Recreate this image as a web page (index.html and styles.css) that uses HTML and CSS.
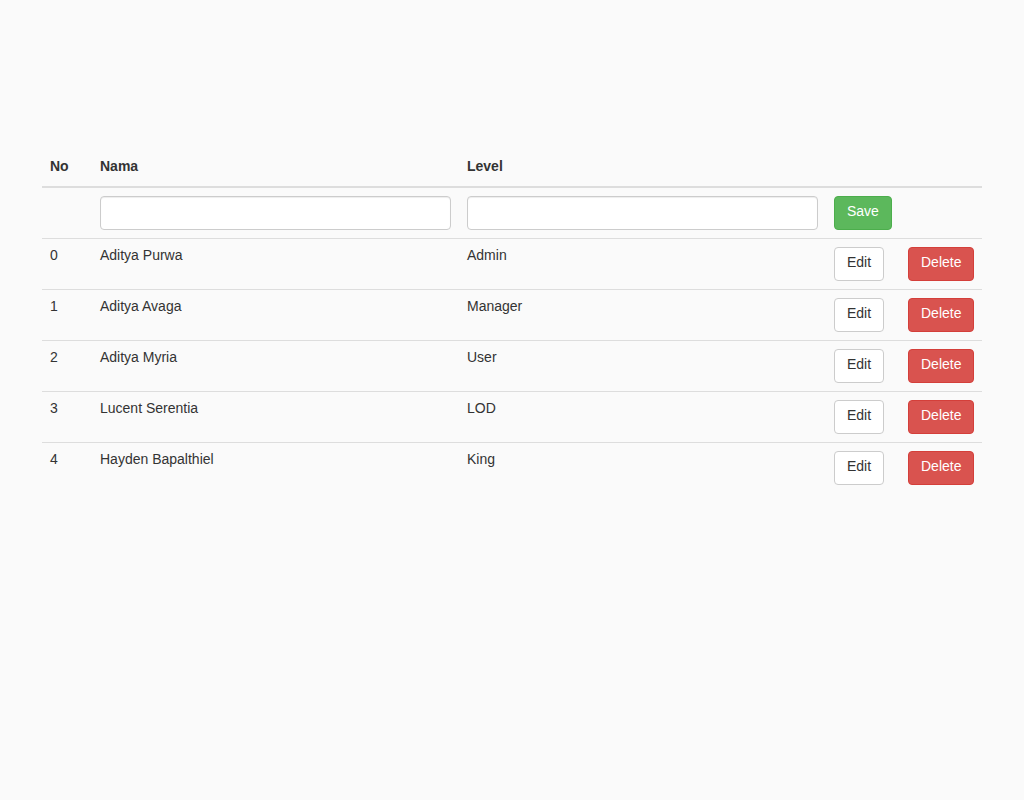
FILE: index.html
```html
<!DOCTYPE html>
<html>
<head>
<meta charset="utf-8">
<link rel="stylesheet" href="styles.css">
</head>
<body>
<div class="container">
  <table class="table">
    <colgroup>
      <col class="c-no"><col class="c-name"><col class="c-level"><col class="c-act1"><col class="c-act2">
    </colgroup>
    <thead>
      <tr><th>No</th><th>Nama</th><th>Level</th><th></th><th></th></tr>
    </thead>
    <tbody>
      <tr>
        <td></td>
        <td class="ctl"><input class="form-control" type="text"></td>
        <td class="ctl"><input class="form-control" type="text"></td>
        <td class="ctl"><button class="btn btn-success">Save</button></td>
        <td></td>
      </tr>
      <tr><td>0</td><td>Aditya Purwa</td><td>Admin</td><td class="ctl"><button class="btn btn-default">Edit</button></td><td class="ctl"><button class="btn btn-danger">Delete</button></td></tr>
      <tr><td>1</td><td>Aditya Avaga</td><td>Manager</td><td class="ctl"><button class="btn btn-default">Edit</button></td><td class="ctl"><button class="btn btn-danger">Delete</button></td></tr>
      <tr><td>2</td><td>Aditya Myria</td><td>User</td><td class="ctl"><button class="btn btn-default">Edit</button></td><td class="ctl"><button class="btn btn-danger">Delete</button></td></tr>
      <tr><td>3</td><td>Lucent Serentia</td><td>LOD</td><td class="ctl"><button class="btn btn-default">Edit</button></td><td class="ctl"><button class="btn btn-danger">Delete</button></td></tr>
      <tr><td>4</td><td>Hayden Bapalthiel</td><td>King</td><td class="ctl"><button class="btn btn-default">Edit</button></td><td class="ctl"><button class="btn btn-danger">Delete</button></td></tr>
    </tbody>
  </table>
</div>
</body>
</html>
```

FILE: styles.css
```css
* { box-sizing: border-box; }
html, body { margin: 0; padding: 0; }
body {
  background: #fafafa;
  font-family: "Liberation Sans", Arial, sans-serif;
  font-size: 14px;
  line-height: 1.42857143;
  color: #333;
}
.container {
  width: 970px;
  margin: 0 auto;
  padding: 150px 15px 0;
}
.table {
  width: 100%;
  border-collapse: collapse;
  border-spacing: 0;
  table-layout: fixed;
}
.c-no { width: 50px; }
.c-name { width: 367px; }
.c-level { width: 367px; }
.c-act1 { width: 74px; }
.c-act2 { width: 82px; }
.table th, .table td {
  padding: 6px 8px 10px;
  text-align: left;
  vertical-align: top;
  line-height: 20px;
}
.table td.ctl { padding: 8px; }
.table th {
  font-weight: bold;
  border-bottom: 2px solid #ddd;
}
.table td { border-top: 1px solid #ddd; }
.form-control {
  display: block;
  width: 100%;
  height: 34px;
  padding: 6px 12px;
  font: inherit;
  color: #555;
  background: #fff;
  border: 1px solid #ccc;
  border-radius: 4px;
  box-shadow: inset 0 1px 1px rgba(0,0,0,.075);
  margin: 0;
}
.btn {
  display: inline-block;
  margin: 0;
  padding: 4px 12px 8px;
  font-family: inherit;
  font-size: 14px;
  line-height: 20px;
  border: 1px solid transparent;
  border-radius: 4px;
  cursor: pointer;
  vertical-align: top;
}
.btn-default { color: #333; background: #fff; border-color: #ccc; }
.btn-success { color: #fff; background: #5cb85c; border-color: #4cae4c; }
.btn-danger { color: #fff; background: #d9534f; border-color: #d43f3a; }
```
